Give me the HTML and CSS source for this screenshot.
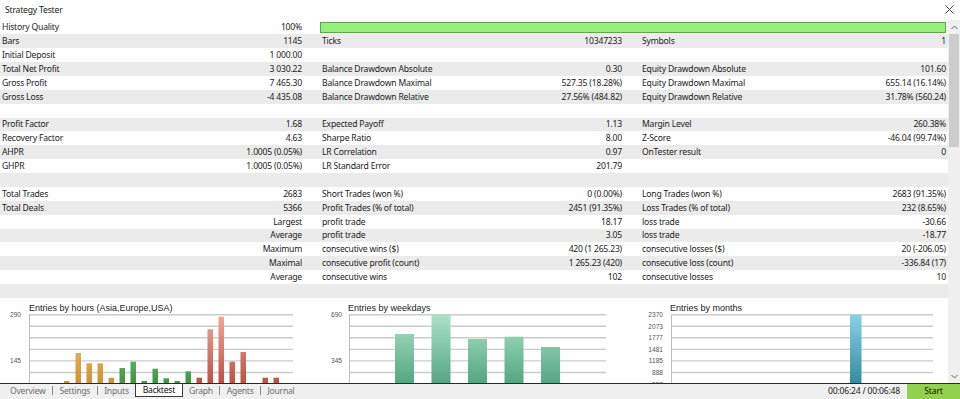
FILE: index.html
```html
<!DOCTYPE html>
<html lang="en">
<head>
  <meta charset="UTF-8">
  <meta name="viewport" content="width=device-width, initial-scale=1.0">
  <link rel="stylesheet" href="styles.css">
  <title>Strategy Tester</title>
</head>
<body>
  <div class="window">
    <div class="titlebar">
      <span>Strategy Tester</span>
      <svg class="close" width="9" height="9" viewBox="0 0 9 9"><path d="M0.5 0.5L8.5 8.5M8.5 0.5L0.5 8.5"/></svg>
    </div>

    <div class="content">
      <div class="report">
        <div class="row">
          <div class="cell"><span>History Quality</span><span>100%</span></div>
          <div class="quality"><div class="quality-bar"></div></div>
        </div>
        <div class="row">
          <div class="cell"><span>Bars</span><span>1145</span></div>
          <div class="cell"><span>Ticks</span><span>10347233</span></div>
          <div class="cell"><span>Symbols</span><span>1</span></div>
        </div>
        <div class="row">
          <div class="cell"><span>Initial Deposit</span><span>1 000.00</span></div>
          <div class="cell"></div>
          <div class="cell"></div>
        </div>
        <div class="row">
          <div class="cell"><span>Total Net Profit</span><span>3 030.22</span></div>
          <div class="cell"><span>Balance Drawdown Absolute</span><span>0.30</span></div>
          <div class="cell"><span>Equity Drawdown Absolute</span><span>101.60</span></div>
        </div>
        <div class="row">
          <div class="cell"><span>Gross Profit</span><span>7 465.30</span></div>
          <div class="cell"><span>Balance Drawdown Maximal</span><span>527.35 (18.28%)</span></div>
          <div class="cell"><span>Equity Drawdown Maximal</span><span>655.14 (16.14%)</span></div>
        </div>
        <div class="row">
          <div class="cell"><span>Gross Loss</span><span>-4 435.08</span></div>
          <div class="cell"><span>Balance Drawdown Relative</span><span>27.56% (484.82)</span></div>
          <div class="cell"><span>Equity Drawdown Relative</span><span>31.78% (560.24)</span></div>
        </div>
        <div class="row"></div>
        <div class="row">
          <div class="cell"><span>Profit Factor</span><span>1.68</span></div>
          <div class="cell"><span>Expected Payoff</span><span>1.13</span></div>
          <div class="cell"><span>Margin Level</span><span>260.38%</span></div>
        </div>
        <div class="row">
          <div class="cell"><span>Recovery Factor</span><span>4.63</span></div>
          <div class="cell"><span>Sharpe Ratio</span><span>8.00</span></div>
          <div class="cell"><span>Z-Score</span><span>-46.04 (99.74%)</span></div>
        </div>
        <div class="row">
          <div class="cell"><span>AHPR</span><span>1.0005 (0.05%)</span></div>
          <div class="cell"><span>LR Correlation</span><span>0.97</span></div>
          <div class="cell"><span>OnTester result</span><span>0</span></div>
        </div>
        <div class="row">
          <div class="cell"><span>GHPR</span><span>1.0005 (0.05%)</span></div>
          <div class="cell"><span>LR Standard Error</span><span>201.79</span></div>
          <div class="cell"></div>
        </div>
        <div class="row"></div>
        <div class="row">
          <div class="cell"><span>Total Trades</span><span>2683</span></div>
          <div class="cell"><span>Short Trades (won %)</span><span>0 (0.00%)</span></div>
          <div class="cell"><span>Long Trades (won %)</span><span>2683 (91.35%)</span></div>
        </div>
        <div class="row">
          <div class="cell"><span>Total Deals</span><span>5366</span></div>
          <div class="cell"><span>Profit Trades (% of total)</span><span>2451 (91.35%)</span></div>
          <div class="cell"><span>Loss Trades (% of total)</span><span>232 (8.65%)</span></div>
        </div>
        <div class="row">
          <div class="cell"><span></span><span>Largest</span></div>
          <div class="cell"><span>profit trade</span><span>18.17</span></div>
          <div class="cell"><span>loss trade</span><span>-30.66</span></div>
        </div>
        <div class="row">
          <div class="cell"><span></span><span>Average</span></div>
          <div class="cell"><span>profit trade</span><span>3.05</span></div>
          <div class="cell"><span>loss trade</span><span>-18.77</span></div>
        </div>
        <div class="row">
          <div class="cell"><span></span><span>Maximum</span></div>
          <div class="cell"><span>consecutive wins ($)</span><span>420 (1 265.23)</span></div>
          <div class="cell"><span>consecutive losses ($)</span><span>20 (-206.05)</span></div>
        </div>
        <div class="row">
          <div class="cell"><span></span><span>Maximal</span></div>
          <div class="cell"><span>consecutive profit (count)</span><span>1 265.23 (420)</span></div>
          <div class="cell"><span>consecutive loss (count)</span><span>-336.84 (17)</span></div>
        </div>
        <div class="row">
          <div class="cell"><span></span><span>Average</span></div>
          <div class="cell"><span>consecutive wins</span><span>102</span></div>
          <div class="cell"><span>consecutive losses</span><span>10</span></div>
        </div>
        <div class="row"></div>

        <div class="charts">
          <!-- entries by hours -->
          <svg class="chart" width="315" height="110">
            <defs>
              <linearGradient id="gOrange" gradientUnits="userSpaceOnUse" x1="0" y1="16" x2="0" y2="109">
                <stop offset="0" stop-color="#f6cf86"/><stop offset="1" stop-color="#c07d16"/>
              </linearGradient>
              <linearGradient id="gGreen" gradientUnits="userSpaceOnUse" x1="0" y1="16" x2="0" y2="109">
                <stop offset="0" stop-color="#94d894"/><stop offset="1" stop-color="#247f24"/>
              </linearGradient>
              <linearGradient id="gRed" gradientUnits="userSpaceOnUse" x1="0" y1="16" x2="0" y2="109">
                <stop offset="0" stop-color="#f2aa9a"/><stop offset="1" stop-color="#ab3322"/>
              </linearGradient>
            </defs>
            <text class="ttl" x="29" y="12.5">Entries by hours (Asia,Europe,USA)</text>
            <g class="grid">
              <line x1="29" x2="293" y1="16.7" y2="16.7"/><line x1="29" x2="293" y1="28.25" y2="28.25"/>
              <line x1="29" x2="293" y1="39.8" y2="39.8"/><line x1="29" x2="293" y1="51.35" y2="51.35"/>
              <line x1="29" x2="293" y1="62.9" y2="62.9"/><line x1="29" x2="293" y1="74.45" y2="74.45"/>
              <line x1="29" x2="293" y1="86" y2="86"/><line x1="29" x2="293" y1="97.55" y2="97.55"/>
            </g>
            <line class="axis" x1="29.5" x2="29.5" y1="16" y2="110"/>
            <text class="lbl" x="21" y="19.2">290</text>
            <text class="lbl" x="21" y="65.4">145</text>
            <g fill="url(#gOrange)">
              <rect x="64" y="83" width="5.5" height="27"/>
              <rect x="75.5" y="55" width="5.5" height="55"/>
              <rect x="86.5" y="65.3" width="5.5" height="45"/>
              <rect x="97.5" y="65.3" width="5.5" height="45"/>
              <rect x="108.5" y="79.7" width="5.5" height="31"/>
            </g>
            <g fill="url(#gGreen)">
              <rect x="119.5" y="70" width="5.5" height="40"/>
              <rect x="130.5" y="63.7" width="5.5" height="47"/>
              <rect x="141.5" y="83" width="5.5" height="27"/>
              <rect x="152.5" y="70.7" width="5.5" height="40"/>
              <rect x="163.5" y="80.3" width="5.5" height="30"/>
              <rect x="174.5" y="83" width="5.5" height="27"/>
              <rect x="185.5" y="73.3" width="5.5" height="37"/>
            </g>
            <g fill="url(#gRed)">
              <rect x="196.5" y="79.7" width="5.5" height="31"/>
              <rect x="207.5" y="31.3" width="5.5" height="79"/>
              <rect x="218.5" y="18.7" width="5.5" height="92"/>
              <rect x="229.5" y="63.7" width="5.5" height="47"/>
              <rect x="240.5" y="54" width="5.5" height="56"/>
              <rect x="262.5" y="79.7" width="5.5" height="31"/>
              <rect x="273.5" y="79.7" width="5.5" height="31"/>
            </g>
          </svg>

          <!-- entries by weekdays -->
          <svg class="chart" width="316" height="110">
            <defs>
              <linearGradient id="gSea" gradientUnits="userSpaceOnUse" x1="0" y1="16" x2="0" y2="109">
                <stop offset="0" stop-color="#ade3c8"/><stop offset="1" stop-color="#35916a"/>
              </linearGradient>
            </defs>
            <text class="ttl" x="33" y="12.5">Entries by weekdays</text>
            <g class="grid">
              <line x1="34" x2="291" y1="16.7" y2="16.7"/><line x1="34" x2="291" y1="28.25" y2="28.25"/>
              <line x1="34" x2="291" y1="39.8" y2="39.8"/><line x1="34" x2="291" y1="51.35" y2="51.35"/>
              <line x1="34" x2="291" y1="62.9" y2="62.9"/><line x1="34" x2="291" y1="74.45" y2="74.45"/>
              <line x1="34" x2="291" y1="86" y2="86"/><line x1="34" x2="291" y1="97.55" y2="97.55"/>
            </g>
            <line class="axis" x1="34.5" x2="34.5" y1="16" y2="110"/>
            <text class="lbl" x="27" y="19.2">690</text>
            <text class="lbl" x="27" y="65.4">345</text>
            <g fill="url(#gSea)">
              <rect x="80" y="36" width="19" height="74"/>
              <rect x="116.5" y="16.7" width="19" height="94"/>
              <rect x="153" y="41" width="19" height="69"/>
              <rect x="189.5" y="38.7" width="19" height="72"/>
              <rect x="226" y="49" width="19" height="61"/>
            </g>
          </svg>

          <!-- entries by months -->
          <svg class="chart" width="317" height="110">
            <defs>
              <linearGradient id="gBlue" gradientUnits="userSpaceOnUse" x1="0" y1="16" x2="0" y2="109">
                <stop offset="0" stop-color="#8ad2e6"/><stop offset="1" stop-color="#16718c"/>
              </linearGradient>
            </defs>
            <text class="ttl" x="39" y="12.5">Entries by months</text>
            <g class="grid">
              <line x1="40" x2="302" y1="16.7" y2="16.7"/><line x1="40" x2="302" y1="28.25" y2="28.25"/>
              <line x1="40" x2="302" y1="39.8" y2="39.8"/><line x1="40" x2="302" y1="51.35" y2="51.35"/>
              <line x1="40" x2="302" y1="62.9" y2="62.9"/><line x1="40" x2="302" y1="74.45" y2="74.45"/>
              <line x1="40" x2="302" y1="86" y2="86"/><line x1="40" x2="302" y1="97.55" y2="97.55"/>
            </g>
            <line class="axis" x1="40.5" x2="40.5" y1="16" y2="110"/>
            <text class="lbl" x="32" y="19.2">2370</text>
            <text class="lbl" x="32" y="30.75">2073</text>
            <text class="lbl" x="32" y="42.3">1777</text>
            <text class="lbl" x="32" y="53.85">1481</text>
            <text class="lbl" x="32" y="65.4">1185</text>
            <text class="lbl" x="32" y="76.95">888</text>
            <text class="lbl" x="32" y="88.5">592</text>
            <rect x="219" y="16.7" width="11.5" height="94" fill="url(#gBlue)"/>
          </svg>
        </div>
      </div>

      <div class="scrollbar">
        <div class="scroll-btn">
          <svg width="7" height="5" viewBox="0 0 7 5"><path d="M0.5 4L3.5 1L6.5 4"/></svg>
        </div>
        <div class="scroll-track"><div class="scroll-thumb"></div></div>
        <div class="scroll-btn">
          <svg width="7" height="5" viewBox="0 0 7 5"><path d="M0.5 1L3.5 4L6.5 1"/></svg>
        </div>
      </div>
    </div>

    <div class="statusbar">
      <div class="tabs">
        <span class="tab">Overview</span><i class="sep"></i>
        <span class="tab">Settings</span><i class="sep"></i>
        <span class="tab">Inputs</span>
        <span class="tab active">Backtest</span>
        <span class="tab">Graph</span><i class="sep"></i>
        <span class="tab">Agents</span><i class="sep"></i>
        <span class="tab">Journal</span>
      </div>
      <div class="timer">00:06:24 / 00:06:48</div>
      <div class="start">Start</div>
    </div>
  </div>
</body>
</html>
```

FILE: styles.css
```css
  body {
    margin: 0;
    width: 960px;
    height: 399px;
    overflow: hidden;
    background-color: white;
    font-family: "Noto Sans", "Open Sans", sans-serif;
    font-size: 8.6px;
    letter-spacing: -0.2px;
    color: #1b1b1b;
  }

  .window {
    display: flex;
    flex-direction: column;
    height: 399px;
  }

  .titlebar {
    height: 20.4px;
    display: flex;
    justify-content: space-between;
    align-items: center;
    padding: 0 6px 1px 5px;
    box-sizing: border-box;
  }

  .close path {
    stroke: #444;
    stroke-width: 1;
    fill: none;
  }

  .content {
    flex: 1;
    display: flex;
    min-height: 0;
  }

  .report {
    width: 948px;
    overflow: hidden;
  }

  .row {
    display: grid;
    grid-template-columns: 320px 320px 1fr;
    align-items: center;
    height: 13.88px;
  }

  .row:nth-child(even) {
    background-color: #ebebeb;
  }

  .cell {
    display: flex;
    justify-content: space-between;
    padding: 0 18px 0 2px;
    white-space: nowrap;
  }

  .cell:nth-child(3) {
    padding-right: 2px;
  }

  .quality {
    grid-column: 2 / 4;
    padding-right: 2px;
  }

  .quality-bar {
    height: 11px;
    box-sizing: border-box;
    background-color: #98ef80;
    border: 1px solid #5aa649;
  }

  .charts {
    display: flex;
    height: 110px;
  }

  .chart {
    display: block;
    flex: none;
  }

  .chart .ttl {
    font-family: "Liberation Sans", Arial, sans-serif;
    font-size: 9px;
    letter-spacing: 0;
    fill: #222;
  }

  .chart .lbl {
    font-family: "Liberation Sans", Arial, sans-serif;
    font-size: 6.6px;
    letter-spacing: 0;
    fill: #555;
    text-anchor: end;
  }

  .grid line {
    stroke: #cccccc;
    stroke-width: 1.4;
  }

  .axis {
    stroke: #bdbdbd;
    stroke-width: 1;
  }

  .scrollbar {
    width: 12px;
    display: flex;
    flex-direction: column;
    background-color: #f0f0f0;
  }

  .scroll-btn {
    height: 14px;
    display: flex;
    justify-content: center;
    align-items: center;
    flex: none;
  }

  .scroll-btn path {
    stroke: #606060;
    stroke-width: 1;
    fill: none;
  }

  .scroll-track {
    flex: 1;
    padding: 0 1px;
  }

  .scroll-thumb {
    height: 113px;
    background-color: #cdcdcd;
  }

  .statusbar {
    height: 16px;
    box-sizing: border-box;
    border-top: 1px solid #2a2a2a;
    background-color: #f0f0f0;
    display: flex;
    align-items: flex-start;
  }

  .tabs {
    display: flex;
    align-items: center;
    padding-left: 3.5px;
    height: 13px;
    flex: 1;
  }

  .tab {
    padding: 0 6.5px;
    color: #6f6f6f;
    line-height: 12px;
    letter-spacing: -0.25px;
  }

  .tab.active {
    color: #111;
    background-color: white;
    border: 1px solid #3a3a3a;
    border-top: none;
    height: 12px;
    padding: 0 6.5px;
  }

  .sep {
    width: 1px;
    height: 9px;
    background-color: #8a8a8a;
  }

  .timer {
    line-height: 15px;
    color: #222;
    margin-right: 7px;
  }

  .start {
    width: 53px;
    height: 15px;
    line-height: 15px;
    text-align: center;
    background-color: #92d050;
    color: #111;
  }
```
